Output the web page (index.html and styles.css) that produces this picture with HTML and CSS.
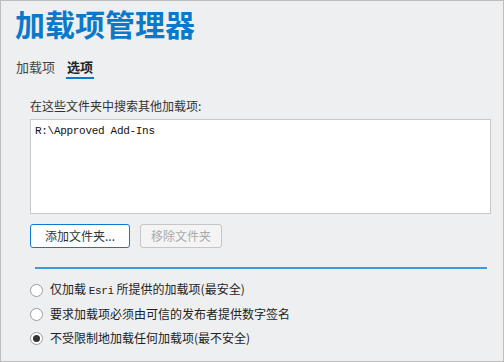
FILE: index.html
```html
<html>

<head>
  <meta charset="utf-8">
  <link rel="stylesheet" href="styles.css">
</head>

<body>
  <div class="window">
    <h1 class="title">加载项管理器</h1>

    <div class="tabs">
      <span class="tab">加载项</span>
      <span class="tab active">选项</span>
    </div>

    <div class="panel">
      <div class="label">在这些文件夹中搜索其他加载项:</div>
      <div class="folders">
        <div class="path">R:\Approved Add-Ins</div>
      </div>

      <div class="buttons">
        <button class="btn primary btn_add">添加文件夹...</button>
        <button class="btn btn_remove" disabled>移除文件夹</button>
      </div>

      <div class="sep"></div>

      <div class="options">
        <div class="option"><span class="radio"></span><span>仅加载 <span class="mono">Esri</span> 所提供的加载项(最安全)</span></div>
        <div class="option"><span class="radio"></span><span>要求加载项必须由可信的发布者提供数字签名</span></div>
        <div class="option"><span class="radio checked"></span><span>不受限制地加载任何加载项(最不安全)</span></div>
      </div>
    </div>
  </div>
</body>

</html>
```

FILE: styles.css
```css
body {
  margin: 0;
  font-family: "Noto Sans CJK SC", "Noto Sans", sans-serif;
  color: #333;
}

.window {
  width: 504px;
  height: 362px;
  box-sizing: border-box;
  border: 1px solid #bdbdbd;
  background-color: #eeeff1;
  padding: 7px 0 0 14px;
}

.title {
  margin: 0;
  font-size: 30px;
  line-height: 30px;
  font-weight: bold;
  color: #0b79c9;
}

.tabs {
  display: flex;
  gap: 10px;
  margin-top: 21px;
}

.tab {
  font-size: 13px;
  line-height: 16px;
  padding: 0 1px 2px 1px;
  border-bottom: 2px solid transparent;
  color: #444;
}

.tab.active {
  font-weight: bold;
  color: #222;
  border-bottom-color: #0a78cc;
}

.panel {
  margin-left: 15px;
}

.label {
  margin-top: 20px;
  font-size: 12px;
  line-height: 14px;
  color: #333;
}

.folders {
  margin-top: 6px;
  width: 461px;
  height: 95px;
  box-sizing: border-box;
  border: 1px solid #c9c9c9;
  background-color: white;
  padding: 5px 4px;
}

.path {
  font-family: "Liberation Mono", monospace;
  font-size: 11px;
  letter-spacing: -0.3px;
  line-height: 13px;
  color: #111;
}

.buttons {
  display: flex;
  gap: 10px;
  margin-top: 10px;
}

.btn {
  height: 24px;
  box-sizing: border-box;
  border: 1px solid #c6c6c6;
  border-radius: 3px;
  background-color: #f4f4f5;
  font-family: "Noto Sans CJK SC", sans-serif;
  font-size: 12px;
  line-height: 14px;
  color: #aaa;
  padding: 0;
}

.btn.primary {
  border-color: #0a78d4;
  background-color: white;
  color: #333;
}

.btn_add {
  width: 100px;
}

.btn_remove {
  width: 82px;
}

.sep {
  margin: 19px 0 0 5px;
  width: 452px;
  height: 2px;
  background-color: #3f9ad9;
}

.options {
  margin-top: 9px;
}

.option {
  display: flex;
  align-items: center;
  height: 24px;
  font-size: 12px;
  line-height: 14px;
  color: #222;
  white-space: pre;
}

.mono {
  font-family: "Liberation Mono", monospace;
  font-size: 11px;
  letter-spacing: -0.3px;
}

.radio {
  display: flex;
  align-items: center;
  justify-content: center;
  width: 13px;
  height: 13px;
  box-sizing: border-box;
  border: 1px solid #9c9c9c;
  border-radius: 50%;
  background-color: white;
  margin-right: 7px;
}

.radio.checked::after {
  content: "";
  width: 7px;
  height: 7px;
  border-radius: 50%;
  background-color: #333;
}
```
